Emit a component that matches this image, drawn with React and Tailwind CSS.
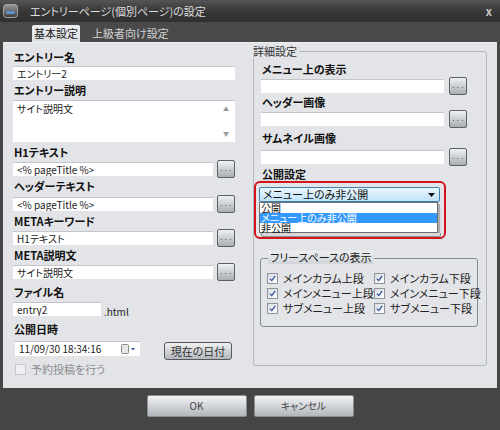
import React from 'react';

// small "..." browse button
const Dots = () => (
  <div className="w-[18px] h-[18px] shrink-0 rounded-[2px] border border-[#5d6167] bg-linear-to-b from-[#f0f2f4] to-[#a9aeb4] flex items-end justify-center pb-[3px] text-[8px] leading-none text-[#555]">
    ···
  </div>
);

const Field = ({ value, className = '' }) => (
  <div className={`h-[14px] bg-white border-t border-[#c3c6ca] pl-[4px] text-[10px] leading-[13px] text-[#222] whitespace-nowrap overflow-hidden ${className}`}>
    {value}
  </div>
);

const Label = ({ children, className = '' }) => (
  <div className={`h-[14px] leading-[14px] text-[11px] font-bold text-[#111] whitespace-nowrap ${className}`}>
    {children}
  </div>
);

const Row = ({ value, width, className = '' }) => (
  <div className={`flex items-center h-[18px] gap-[4px] ${className}`}>
    <Field value={value} className={width} />
    <Dots />
  </div>
);

const Check = ({ label }) => (
  <div className="flex items-center h-[12px]">
    <div className="w-[11px] h-[11px] border border-[#8f959b] bg-linear-to-br from-[#d9dde2] to-white flex items-center justify-center">
      <svg width="7" height="7" viewBox="0 0 7 7">
        <path d="M0.8 3.6 L2.8 5.6 L6.2 0.9" stroke="#2f4f9e" strokeWidth="1.3" fill="none" />
      </svg>
    </div>
    <span className="ml-[5px] text-[11px] leading-[12px] text-[#222] whitespace-nowrap">{label}</span>
  </div>
);

export default function App() {
  const freeSpace = [
    'メインカラム上段', 'メインカラム下段',
    'メインメニュー上段', 'メインメニュー下段',
    'サブメニュー上段', 'サブメニュー下段',
  ];

  return (
    <div className="w-[500px] h-[430px] bg-[#454545] flex flex-col font-['Noto_Sans_CJK_JP','Noto_Sans',sans-serif] [font-feature-settings:'palt'] select-none">
      {/* タイトルバー */}
      <div className="h-[22px] flex items-center bg-linear-to-b from-[#555] via-[#383838] to-[#2f2f2f]">
        <svg width="15" height="14" viewBox="0 0 15 14" className="ml-[3px]">
          <defs>
            <linearGradient id="ic" x1="0" y1="0" x2="0" y2="1">
              <stop offset="0" stopColor="#9a9a9a" />
              <stop offset="1" stopColor="#3a3a3a" />
            </linearGradient>
          </defs>
          <rect x="0.5" y="0.5" width="14" height="13" rx="3" fill="url(#ic)" stroke="#a5a5a5" />
          <rect x="3" y="7" width="9" height="3" rx="1" fill="#5d8fc8" />
        </svg>
        <span className="ml-[12px] text-[11px] text-[#dedede] whitespace-nowrap">エントリーページ(個別ページ)の設定</span>
        <span className="ml-auto mr-[8px] text-[11px] font-bold text-[#c8c8c8]">x</span>
      </div>

      {/* タブ */}
      <div className="h-[20px] flex items-end pl-[32px] bg-[#4a4a4a]">
        <div className="w-[48px] h-[17px] rounded-t-[2px] bg-linear-to-b from-[#eceef0] to-[#dcdfe2] text-[11px] leading-[17px] text-center text-[#222]">
          基本設定
        </div>
        <div className="ml-[12px] h-[17px] text-[11px] leading-[17px] text-[#d2d2d2] whitespace-nowrap">上級者向け設定</div>
      </div>

      {/* 本体 */}
      <div className="h-[346px] mx-[3px] bg-[#e2e4e7] border-t border-[#eef0f2] flex pt-[7px] pl-[10px]">
        {/* 左カラム */}
        <div className="w-[222px] flex flex-col">
          <Label className="pl-[1px]">エントリー名</Label>
          <Field value="エントリー2" className="mt-[2px] w-[222px]" />
          <Label className="mt-[3px] pl-[1px]">エントリー説明</Label>
          <div className="mt-[3px] h-[42px] bg-white border-t border-[#c3c6ca] flex">
            <div className="flex-1 pl-[4px] pt-[1px] text-[10px] leading-[13px] text-[#222]">サイト説明文</div>
            <div className="w-[14px] mr-[2px] flex flex-col items-center justify-between py-[5px] text-[6px] leading-none text-[#9a9a9a]">
              <span>▲</span>
              <span>▼</span>
            </div>
          </div>
          <Label className="mt-[3px] pl-[1px]">H1テキスト</Label>
          <Row value="<% pageTitle %>" width="w-[200px]" className="mt-[1px]" />
          <Label className="mt-[1px] pl-[1px]">ヘッダーテキスト</Label>
          <Row value="<% pageTitle %>" width="w-[200px]" className="mt-[2px]" />
          <Label className="mt-[1px] pl-[1px]">METAキーワード</Label>
          <Row value="H1テキスト" width="w-[200px]" className="mt-[1px]" />
          <Label className="mt-[1px] pl-[1px]">META説明文</Label>
          <Row value="サイト説明文" width="w-[200px]" className="mt-[1px]" />
          <Label className="mt-[4px] pl-[1px]">ファイル名</Label>
          <div className="mt-[3px] flex items-end">
            <Field value="entry2" className="w-[88px]" />
            <span className="ml-[3px] text-[10px] leading-[12px] text-[#222] -mb-[2px]">.html</span>
          </div>
          <Label className="mt-[6px] pl-[1px]">公開日時</Label>
          <div className="mt-[5px] flex items-start h-[19px]">
            <div className="ml-[2px] w-[125px] h-[15px] bg-white border-t border-[#c3c6ca] flex items-center pl-[4px]">
              <span className="text-[10px] leading-[14px] text-[#222] whitespace-nowrap">11/09/30 18:34:16</span>
              <svg width="15" height="10" viewBox="0 0 15 10" className="ml-auto mr-[4px]">
                <rect x="0.5" y="0.5" width="7" height="9" rx="1" fill="#e6e6e6" stroke="#8a8a8a" />
                <path d="M10 4 L14 4 L12 6.5 Z" fill="#2f4f9e" />
              </svg>
            </div>
            <div className="ml-[24px] mt-[1px] w-[68px] h-[18px] rounded-[3px] border border-[#55595e] bg-linear-to-b from-[#f1f2f4] to-[#b3b7bc] text-[11px] leading-[16px] text-center text-[#333]">
              現在の日付
            </div>
          </div>
          <div className="mt-[3px] ml-[2px] flex items-center h-[13px]">
            <div className="w-[11px] h-[11px] border border-[#c4c8cc] bg-[#eef0f2]" />
            <span className="ml-[5px] text-[11px] leading-[13px] text-[#8a8c8f]">予約投稿を行う</span>
          </div>
        </div>

        {/* 右カラム：詳細設定 */}
        <div className="relative ml-[18px] mt-[1px] w-[234px] h-[315px] rounded-[3px] border border-[#b4b8bd] flex flex-col">
          <span className="absolute -top-[8px] -left-[1px] bg-[#e2e4e7] pr-[2px] text-[11px] leading-[14px] text-[#333]">詳細設定</span>
          <Label className="mt-[10px] ml-[8px]">メニュー上の表示</Label>
          <Row value="" width="w-[183px]" className="mt-[1px] ml-[7px] gap-[5px]" />
          <Label className="ml-[8px]">ヘッダー画像</Label>
          <Row value="" width="w-[183px]" className="mt-[1px] ml-[7px] gap-[5px]" />
          <Label className="mt-[3px] ml-[8px]">サムネイル画像</Label>
          <Row value="" width="w-[183px]" className="mt-[3px] ml-[7px] gap-[5px]" />
          <Label className="mt-[1px] ml-[8px]">公開設定</Label>

          {/* 赤枠 */}
          <div className="w-[192px] h-[58px] rounded-[6px] border-2 border-[#d3141d] pt-[4px] pl-[3px]">
            <div className="w-[181px] h-[15px] rounded-[2px] border border-[#3c7fb1] bg-linear-to-b from-[#eaf6fd] to-[#bfe3f8] flex items-center pl-[3px]">
              <span className="text-[11px] leading-[13px] text-[#111]">メニュー上のみ非公開</span>
              <svg width="7" height="4" viewBox="0 0 7 4" className="ml-auto mr-[4px]">
                <path d="M0 0 L7 0 L3.5 4 Z" fill="#111" />
              </svg>
            </div>
            <div className="w-[179px] h-[31px] border border-[#6e6e6e] bg-white shadow-[2px_2px_1px_rgba(0,0,0,0.25)] text-[10px] leading-[10px]">
              <div className="h-[10px] pl-[1px] text-[#111]">公開</div>
              <div className="h-[10px] pl-[1px] bg-[#3399ff] text-white">メニュー上のみ非公開</div>
              <div className="h-[9px] pl-[1px] text-[#111]">非公開</div>
            </div>
            <div className="ml-[2px] w-[180px] h-[4px] border-x border-b border-[#8f8f8f] rounded-b-[2px] bg-[#d6d8db]" />
          </div>

          {/* フリースペースの表示 */}
          <div className="relative mt-[19px] ml-[6px] w-[218px] h-[69px] rounded-[3px] border border-[#868b91] pt-[13px] pl-[6px]">
            <span className="absolute -top-[8px] left-[7px] px-[2px] bg-linear-to-b from-[#eceef0] to-[#d2d5d9] text-[11px] leading-[13px] text-[#222] whitespace-nowrap">
              フリースペースの表示
            </span>
            <div className="grid grid-cols-[107px_1fr] gap-y-[3px]">
              {freeSpace.map((item) => (
                <Check key={item} label={item} />
              ))}
            </div>
          </div>
        </div>
      </div>

      {/* ボタン */}
      <div className="flex-1 flex justify-center gap-[7px] pt-[7px]">
        <div className="w-[100px] h-[22px] rounded-[2px] border border-[#8a8f94] bg-linear-to-b from-[#f3f4f6] to-[#b2b6bb] text-[10px] leading-[20px] text-center text-[#444]">
          OK
        </div>
        <div className="w-[100px] h-[22px] rounded-[2px] border border-[#8a8f94] bg-linear-to-b from-[#f3f4f6] to-[#b2b6bb] text-[10px] leading-[20px] text-center text-[#444]">
          キャンセル
        </div>
      </div>
    </div>
  );
}
